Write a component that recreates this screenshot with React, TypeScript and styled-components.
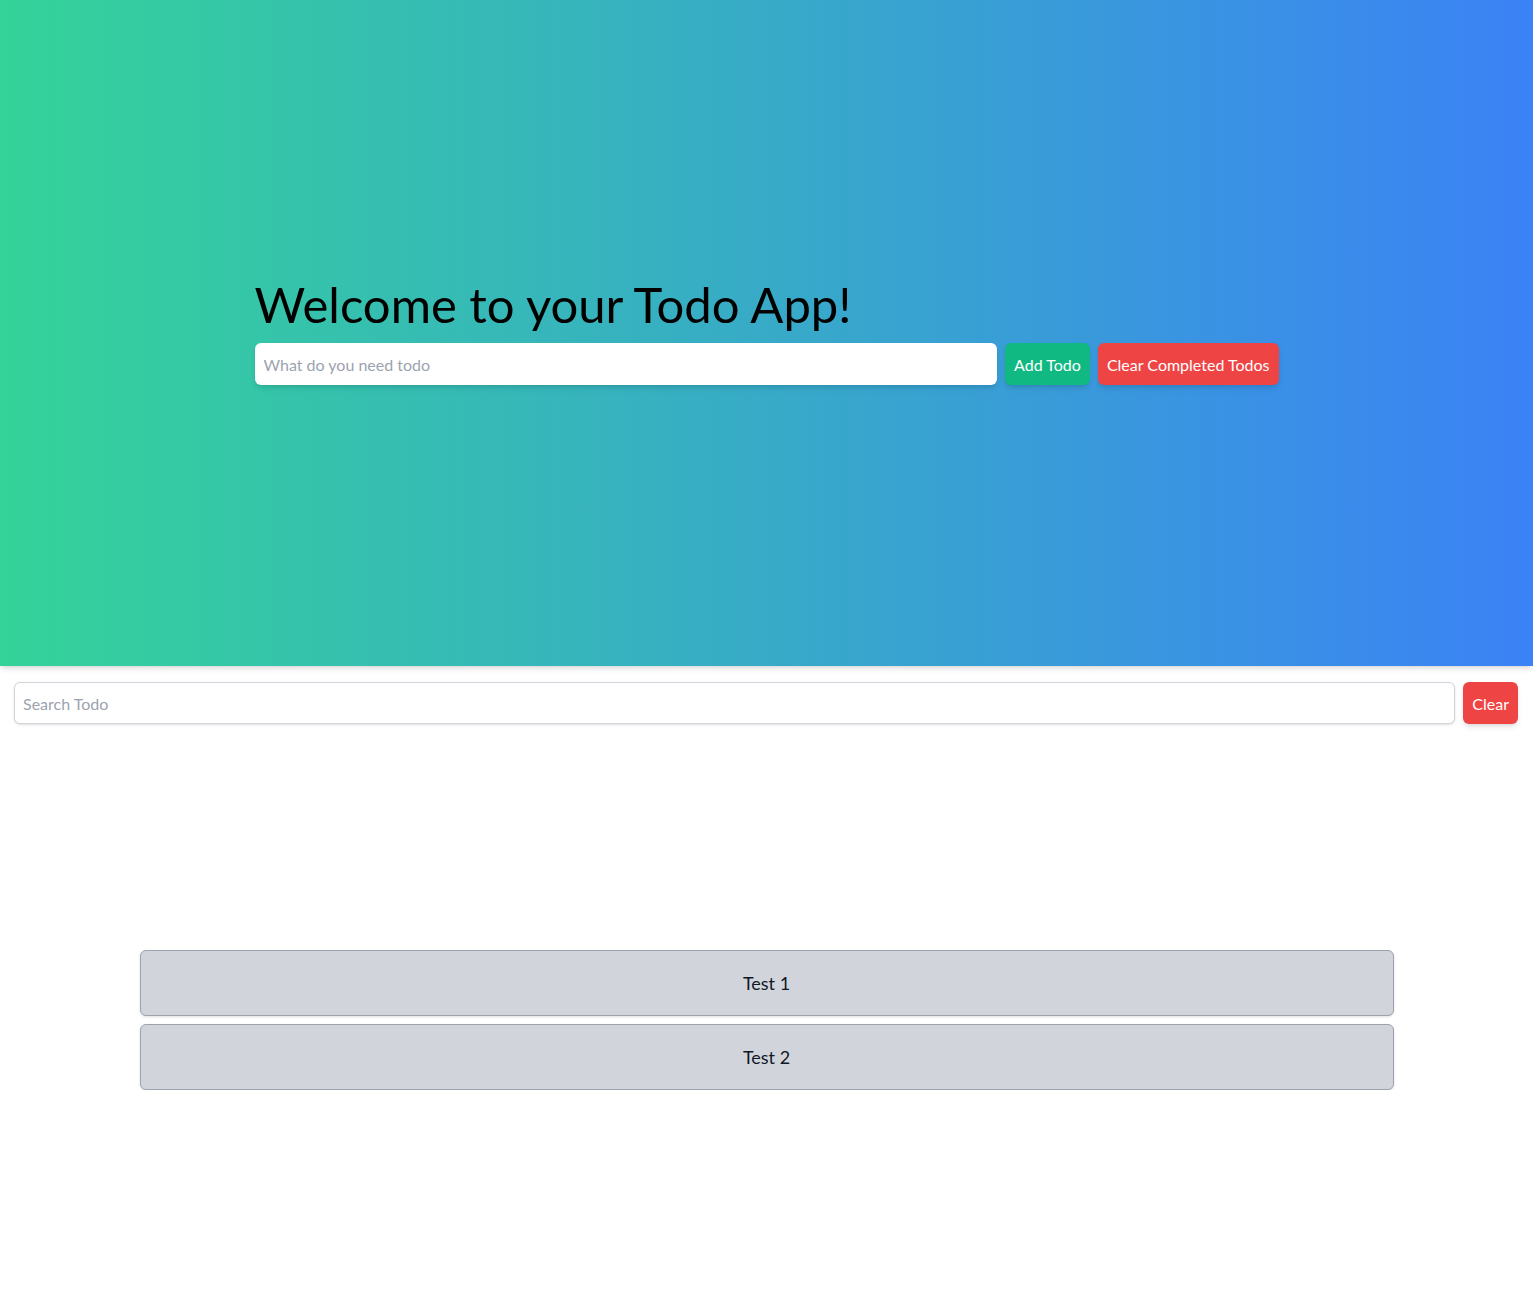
import * as React from 'react';
import styled, { createGlobalStyle } from 'styled-components';

const GlobalStyle = createGlobalStyle`
  * { box-sizing: border-box; }
  body {
    margin: 0;
    font-family: Lato, 'Open Sans', sans-serif;
    color: #111827;
    background: #ffffff;
  }
`;

const todos = [
  { id: 1, title: 'Test 1' },
  { id: 2, title: 'Test 2' },
];

export default function App() {
  return (
    <>
      <GlobalStyle />
      <Hero>
        <HeroInner>
          <Title>Welcome to your Todo App!</Title>
          <Row>
            <TodoInput placeholder="What do you need todo" />
            <ActionButton $tone="green">Add Todo</ActionButton>
            <ActionButton $tone="red">Clear Completed Todos</ActionButton>
          </Row>
        </HeroInner>
      </Hero>
      <SearchBar>
        <SearchInput placeholder="Search Todo" />
        <ActionButton $tone="red">Clear</ActionButton>
      </SearchBar>
      <TodoList>
        {todos.map((t) => (
          <TodoCard key={t.id}>{t.title}</TodoCard>
        ))}
      </TodoList>
    </>
  );
}

const Hero = styled.header`
  height: 666px;
  display: flex;
  align-items: center;
  justify-content: center;
  background: linear-gradient(to right, #34d399, #3b82f6);
  box-shadow: 0 4px 6px -1px rgba(0, 0, 0, 0.1), 0 2px 4px -2px rgba(0, 0, 0, 0.1);
  position: relative;
`;

const HeroInner = styled.div`
  width: 1024px;
  display: flex;
  flex-direction: column;
  gap: 16px;
`;

const Title = styled.h1`
  margin: 0;
  font-size: 49px;
  line-height: 46px;
  font-weight: 400;
  color: #000;
`;

const Row = styled.div`
  display: flex;
  gap: 8px;
`;

const TodoInput = styled.input`
  flex: 1;
  height: 42px;
  border: none;
  border-radius: 6px;
  padding: 0 9px;
  font-family: inherit;
  font-size: 16px;
  box-shadow: 0 4px 6px -1px rgba(0, 0, 0, 0.1), 0 2px 4px -2px rgba(0, 0, 0, 0.1);
  outline: none;
  &::placeholder { color: #9ca3af; }
`;

const ActionButton = styled.button<{ $tone: 'green' | 'red' }>`
  height: 42px;
  padding: 0 9px;
  border: none;
  border-radius: 6px;
  font-family: inherit;
  font-size: 16px;
  color: #ffffff;
  background: ${(p) => (p.$tone === 'green' ? '#10b981' : '#ef4444')};
  box-shadow: 0 4px 6px -1px rgba(0, 0, 0, 0.1), 0 2px 4px -2px rgba(0, 0, 0, 0.1);
  cursor: pointer;
  white-space: nowrap;
`;

const SearchBar = styled.div`
  display: flex;
  gap: 8px;
  padding: 16px 15px 16px 14px;
`;

const SearchInput = styled.input`
  flex: 1;
  height: 42px;
  border: 1px solid #d1d5db;
  border-radius: 6px;
  padding: 0 8px;
  font-family: inherit;
  font-size: 16px;
  box-shadow: 0 1px 3px 0 rgba(0, 0, 0, 0.1), 0 1px 2px -1px rgba(0, 0, 0, 0.1);
  outline: none;
  &::placeholder { color: #9ca3af; }
`;

const TodoList = styled.ul`
  list-style: none;
  margin: 210px auto 0;
  padding: 0;
  width: 1254px;
  display: flex;
  flex-direction: column;
  gap: 8px;
`;

const TodoCard = styled.li`
  height: 66px;
  display: flex;
  align-items: center;
  justify-content: center;
  background: #d1d5db;
  border: 1px solid #9ca3af;
  border-radius: 6px;
  box-shadow: 0 1px 3px 0 rgba(0, 0, 0, 0.1), 0 1px 2px -1px rgba(0, 0, 0, 0.1);
  font-size: 18px;
  color: #111827;
`;
